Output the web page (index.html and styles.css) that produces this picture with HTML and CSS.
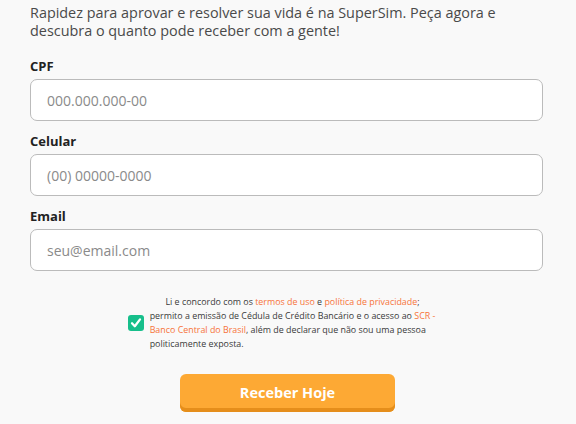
FILE: index.html
```html
<!DOCTYPE html>
<html lang="pt-BR">
<head>
    <meta charset="UTF-8">
    <meta name="viewport" content="width=device-width, initial-scale=1.0">
    <title>SuperSim</title>
    <link rel="stylesheet" href="styles.css">
</head>
<body>
    <div class="wrap">
        <p class="intro">Rapidez para aprovar e resolver sua vida é na SuperSim. Peça agora e<br>descubra o quanto pode receber com a gente!</p>

        <form class="form">
            <div class="field">
                <label class="label" for="cpf">CPF</label>
                <input class="input" id="cpf" type="text" placeholder="000.000.000-00">
            </div>
            <div class="field">
                <label class="label" for="cel">Celular</label>
                <input class="input" id="cel" type="text" placeholder="(00) 00000-0000">
            </div>
            <div class="field">
                <label class="label" for="email">Email</label>
                <input class="input" id="email" type="text" placeholder="seu@email.com">
            </div>

            <div class="terms">
                <span class="check">
                    <svg width="12" height="12" viewBox="0 0 12 12"><path d="M2 6.3 L4.8 9.2 L10 2.4" fill="none" stroke="#fff" stroke-width="2.3" stroke-linecap="round" stroke-linejoin="round"/></svg>
                </span>
                <div class="terms-text">
                    <span class="first">Li e concordo com os <a href="#">termos de uso</a> e <a href="#">política de privacidade</a>;</span>
                    permito a emissão de Cédula de Crédito Bancário e o acesso ao <a href="#">SCR -<br>Banco Central do Brasil</a>, além de declarar que não sou uma pessoa<br>politicamente exposta.
                </div>
            </div>

            <div class="actions">
                <button type="button" class="btn">Receber Hoje</button>
            </div>
        </form>
    </div>
</body>
</html>
```

FILE: styles.css
```css
body {
    margin: 0;
    background-color: #f9f9f9;
    font-family: "Open Sans", "Liberation Sans", sans-serif;
    color: #444;
}

.wrap {
    padding: 0 33px 0 30px;
}

.intro {
    margin: 4px 0 0;
    font-size: 14.4px;
    line-height: 18px;
    color: #4a4a4a;
}

.form {
    margin-top: 18px;
}

.field {
    display: flex;
    flex-direction: column;
    margin-bottom: 12px;
}

.label {
    font-size: 13px;
    font-weight: 700;
    line-height: 16px;
    color: #222;
    margin-bottom: 5px;
}

.input {
    box-sizing: border-box;
    height: 42px;
    border: 1px solid #bbb;
    border-radius: 7px;
    background: #fff;
    padding: 0 16px;
    font-family: inherit;
    font-size: 14px;
    color: #333;
}

.input::placeholder {
    color: #8a8a8a;
}

.terms {
    display: flex;
    align-items: center;
    justify-content: center;
    gap: 6px;
    margin-top: 24px;
    padding-right: 10px;
}

.check {
    width: 16px;
    height: 16px;
    border-radius: 3px;
    background-color: #17bf8b;
    display: flex;
    align-items: center;
    justify-content: center;
}

.terms-text {
    font-size: 8.9px;
    line-height: 14px;
    white-space: nowrap;
    color: #3a3a3a;
}

.terms-text .first {
    display: block;
    text-align: center;
}

.terms-text a {
    color: #f7743a;
    text-decoration: none;
}

.actions {
    display: flex;
    justify-content: center;
    margin-top: 23px;
}

.btn {
    width: 215px;
    height: 38px;
    margin-left: 2px;
    border: none;
    border-radius: 6px;
    background-color: #fda934;
    box-shadow: inset 0 -4px 0 #e58e1b;
    color: #fff;
    font-family: inherit;
    font-size: 14.5px;
    font-weight: 700;
    padding-bottom: 3px;
}
```
